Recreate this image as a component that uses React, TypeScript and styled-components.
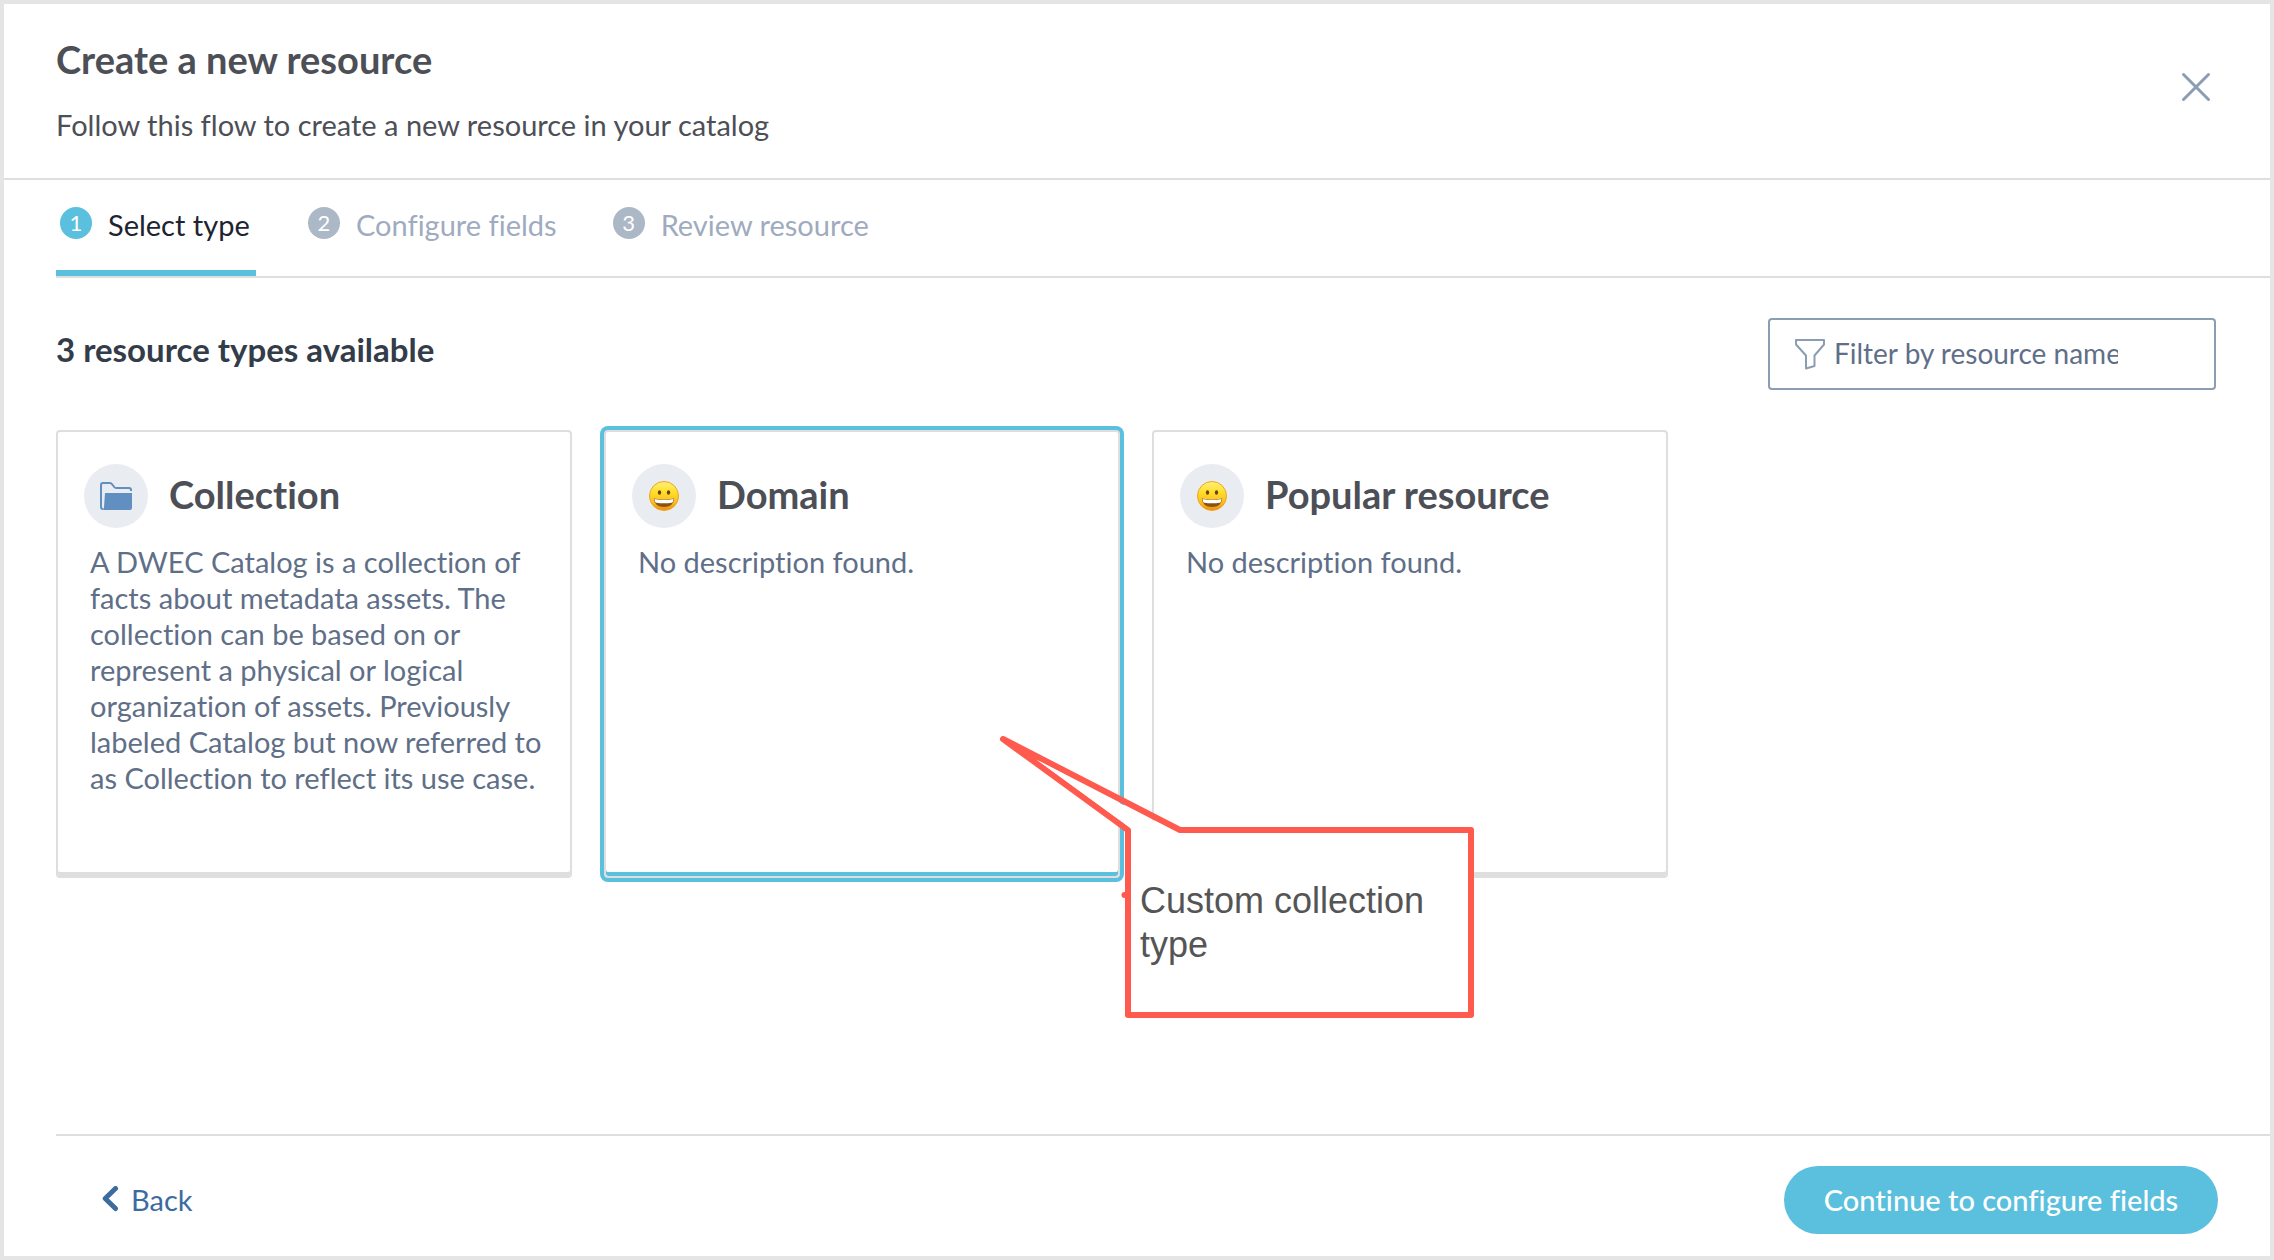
import React, { useState } from 'react';
import styled, { createGlobalStyle, css } from 'styled-components';

const color = {
  frame: '#e5e5e5',
  rule: '#dedede',
  title: '#4d4f57',
  heading: '#333c49',
  body: '#5f6f88',
  active: '#1d2430',
  muted: '#9fabbe',
  badge: '#adb8c7',
  outline: '#8b9db3',
  accent: '#5bbfde',
  link: '#3e6b9f',
  halo: '#e9ecf1',
  folder: '#628fc2',
  callout: '#ff5a4d',
};

const sans = '"Lato", "Open Sans", sans-serif';

const GlobalStyle = createGlobalStyle`
  *, *::before, *::after { box-sizing: border-box; }
  body { margin: 0; background: #fff; font-family: ${sans}; font-variant-ligatures: none; }
  h1, h2, p, ul, ol { margin: 0; padding: 0; }
  ul, ol { list-style: none; }
  button, input { font: inherit; font-variant-ligatures: none; }
`;

const Dialog = styled.main`
  display: flex;
  flex-direction: column;
  min-height: 100vh;
  border: 4px solid ${color.frame};
  background: #fff;
  font-size: 29px;
  line-height: 36px;
`;

const Header = styled.header`
  display: flex;
  justify-content: space-between;
  align-items: flex-start;
  padding: 33px 52px 35px;
  border-bottom: 2px solid ${color.rule};
`;

const HeaderText = styled.div`
  display: flex;
  flex-direction: column;
  gap: 26px;
  color: ${color.title};
`;

const Title = styled.h1`
  font-size: 38px;
  line-height: 44px;
  font-weight: 700;
`;

const CloseButton = styled.button`
  display: flex;
  align-items: center;
  justify-content: center;
  width: 44px;
  height: 44px;
  margin-top: 28px;
  padding: 0;
  border: 0;
  background: none;
  color: ${color.outline};
  cursor: pointer;
`;

const Steps = styled.ol`
  display: flex;
  gap: 48px;
  margin-left: 52px;
  border-bottom: 2px solid ${color.rule};
`;

const Step = styled.li<{ $active: boolean; $width: number }>`
  display: flex;
  align-items: flex-start;
  gap: 16px;
  min-width: ${p => p.$width}px;
  padding: 27px 4px;
  border-bottom: 6px solid ${p => (p.$active ? color.accent : 'transparent')};
  color: ${p => (p.$active ? color.active : color.muted)};
`;

const StepBadge = styled.span<{ $active: boolean }>`
  width: 32px;
  height: 32px;
  border-radius: 50%;
  background: ${p => (p.$active ? color.accent : color.badge)};
  color: #fff;
  font-size: 22px;
  line-height: 32px;
  text-align: center;
`;

const Content = styled.section`
  display: flex;
  flex: 1;
  flex-direction: column;
  gap: 40px;
  padding: 40px 54px 40px 52px;
`;

const Toolbar = styled.div`
  display: flex;
  justify-content: space-between;
  align-items: flex-start;
`;

const SectionTitle = styled.h2`
  padding-top: 11px;
  color: ${color.heading};
  font-size: 33px;
  line-height: 40px;
  font-weight: 700;
`;

const FilterBox = styled.label`
  display: flex;
  align-items: center;
  gap: 8px;
  width: 448px;
  height: 72px;
  padding: 0 24px;
  border: 2px solid ${color.outline};
  border-radius: 4px;
  color: ${color.outline};
`;

const FilterInput = styled.input`
  width: 284px;
  height: 40px;
  padding: 0 0 2px;
  border: 0;
  outline: 0;
  background: none;
  color: ${color.body};
  font-size: 28px;

  &::placeholder {
    color: ${color.body};
    opacity: 1;
  }
`;

const CardGrid = styled.ul`
  display: grid;
  grid-template-columns: repeat(auto-fill, 516px);
  gap: 32px;
`;

const CardItem = styled.li<{ $raised: boolean }>`
  position: relative;
  display: flex;
  z-index: ${p => (p.$raised ? 1 : 0)};
`;

const Card = styled.button<{ $selected: boolean }>`
  display: flex;
  flex-direction: column;
  gap: 16px;
  width: 100%;
  min-height: 448px;
  padding: 32px 26px;
  border: 2px solid ${color.rule};
  border-radius: 4px;
  background: #fff;
  box-shadow: inset 0 -4px 0 ${color.rule};
  text-align: left;
  cursor: pointer;

  ${p =>
    p.$selected &&
    css`
      box-shadow: inset 0 -4px 0 ${color.accent}, 0 0 0 4px ${color.accent};
    `}
`;

const CardHead = styled.span`
  display: flex;
  align-items: center;
  gap: 21px;
`;

const IconHalo = styled.span`
  display: flex;
  align-items: center;
  justify-content: center;
  width: 64px;
  height: 64px;
  border-radius: 50%;
  background: ${color.halo};
`;

const CardTitle = styled.span`
  padding-bottom: 4px;
  color: ${color.title};
  font-size: 38px;
  line-height: 44px;
  font-weight: 700;
`;

const CardText = styled.span`
  padding-left: 6px;
  color: ${color.body};
`;

const Callout = styled.aside`
  position: absolute;
  top: 304px;
  left: 394px;
  width: 478px;
  height: 288px;
  pointer-events: none;
`;

const CalloutShape = styled.svg`
  display: block;
`;

const CalloutText = styled.p`
  position: absolute;
  top: 145px;
  left: 142px;
  width: 310px;
  color: #555;
  font-family: "Liberation Sans", Arial, sans-serif;
  font-size: 36px;
  line-height: 44px;
`;

const Footer = styled.footer`
  display: flex;
  justify-content: space-between;
  align-items: center;
  margin-left: 52px;
  padding: 30px 52px 22px 46px;
  border-top: 2px solid ${color.rule};
`;

const BackButton = styled.button`
  display: flex;
  align-items: center;
  gap: 12px;
  padding: 0;
  border: 0;
  background: none;
  color: ${color.link};
  cursor: pointer;
`;

const PrimaryButton = styled.button`
  min-width: 434px;
  height: 68px;
  padding: 0 36px;
  border: 0;
  border-radius: 34px;
  background: ${color.accent};
  color: #fff;
  font-weight: 500;
  cursor: pointer;
`;

function CloseIcon() {
  return (
    <svg width="30" height="30" viewBox="0 0 30 30" fill="none" stroke="currentColor" strokeWidth="3" strokeLinecap="round" aria-hidden="true">
      <path d="M2.5 2.5 27.5 27.5M27.5 2.5 2.5 27.5" />
    </svg>
  );
}

function FunnelIcon() {
  return (
    <svg width="32" height="32" viewBox="0 0 32 32" fill="none" stroke="currentColor" strokeWidth="2" strokeLinejoin="round" aria-hidden="true">
      <path d="M2 2H30V6.500L20.500 17.500V28L12 30.500V17.500L2 6.500Z" />
    </svg>
  );
}

function ChevronIcon() {
  return (
    <svg width="17" height="28" viewBox="0 0 17 28" fill="none" stroke="currentColor" strokeWidth="5" strokeLinecap="round" strokeLinejoin="round" aria-hidden="true">
      <path d="M13.500 2.500 3.200 12.500 13.500 22.500" />
    </svg>
  );
}

function FolderIcon() {
  return (
    <svg width="32" height="28" viewBox="0 0 32 28" fill="none" aria-hidden="true">
      <path d="M31 9V8Q31 6 29 6H16Q15 6 14.200 5L12 2.200Q11.200 1 10 1H3Q1 1 1 3V25Q1 27 3 27" stroke={color.folder} strokeWidth="2" />
      <path d="M5 11H32V26Q32 28 30 28H2.500Q3.800 27 4 25Z" fill={color.folder} />
    </svg>
  );
}

function GrinIcon({ id }: { id: string }) {
  return (
    <svg width="30" height="30" viewBox="0 0 30 30" aria-hidden="true">
      <defs>
        <linearGradient id={id} x1="0" y1="0" x2="0" y2="1">
          <stop offset="0" stopColor="#fff07a" />
          <stop offset="0.35" stopColor="#ffe02e" />
          <stop offset="0.75" stopColor="#fcba1e" />
          <stop offset="1" stopColor="#ee8a12" />
        </linearGradient>
      </defs>
      <circle cx="15" cy="15" r="14.500" fill={`url(#${id})`} stroke="#eda51f" strokeWidth="1" />
      <ellipse cx="10.500" cy="11.500" rx="1.700" ry="2.300" fill="#6d4210" />
      <ellipse cx="19.500" cy="11.500" rx="1.700" ry="2.300" fill="#6d4210" />
      <path d="M4.800 17.500Q15 19.500 25.200 17.500Q24.500 26 15 26Q5.500 26 4.800 17.500Z" fill="#8a5410" />
      <path d="M5.500 17.900Q15 19.700 24.500 17.900Q24.300 21.300 22.800 21.700Q15 22.800 7.200 21.700Q5.700 21.300 5.500 17.900Z" fill="#fff" />
    </svg>
  );
}

const steps = [
  { label: 'Select type', width: 200 },
  { label: 'Configure fields', width: 256 },
  { label: 'Review resource', width: 256 },
];

const types = [
  {
    name: 'Collection',
    text: 'A DWEC Catalog is a collection of facts about metadata assets. The collection can be based on or represent a physical or logical organization of assets. Previously labeled Catalog but now referred to as Collection to reflect its use case.',
    icon: <FolderIcon />,
  },
  { name: 'Domain', text: 'No description found.', icon: <GrinIcon id="grin-domain" />, note: 'Custom collection type' },
  { name: 'Popular resource', text: 'No description found.', icon: <GrinIcon id="grin-popular" /> },
];

function CalloutNote({ text }: { text: string }) {
  return (
    <Callout>
      <CalloutShape width="478" height="288" viewBox="0 0 478 288" aria-hidden="true">
        <circle cx="126.500" cy="161" r="3" fill={color.callout} />
        <path
          d="M5 5 182 96H473V281H130V96Z"
          fill="none"
          stroke={color.callout}
          strokeWidth="6"
          strokeLinejoin="round"
        />
        <path d="M40 26.500 179 99H470V278H133V94.500Z" fill="#fff" />
      </CalloutShape>
      <CalloutText>{text}</CalloutText>
    </Callout>
  );
}

export default function App() {
  const [selected, setSelected] = useState('Domain');
  const [filter, setFilter] = useState('');
  const shown = types.filter(t => t.name.toLowerCase().includes(filter.toLowerCase()));

  return (
    <>
      <GlobalStyle />
      <Dialog>
        <Header>
          <HeaderText>
            <Title>Create a new resource</Title>
            <p>Follow this flow to create a new resource in your catalog</p>
          </HeaderText>
          <CloseButton type="button" aria-label="Close">
            <CloseIcon />
          </CloseButton>
        </Header>

        <Steps>
          {steps.map((step, i) => (
            <Step key={step.label} $active={i === 0} $width={step.width} aria-current={i === 0 ? 'step' : undefined}>
              <StepBadge $active={i === 0}>{i + 1}</StepBadge>
              <span>{step.label}</span>
            </Step>
          ))}
        </Steps>

        <Content>
          <Toolbar>
            <SectionTitle>{shown.length} resource types available</SectionTitle>
            <FilterBox>
              <FunnelIcon />
              <FilterInput
                type="text"
                aria-label="Filter by resource name"
                placeholder="Filter by resource name"
                value={filter}
                onChange={e => setFilter(e.target.value)}
              />
            </FilterBox>
          </Toolbar>

          <CardGrid>
            {shown.map(type => (
              <CardItem key={type.name} $raised={Boolean(type.note)}>
                <Card
                  type="button"
                  aria-pressed={selected === type.name}
                  $selected={selected === type.name}
                  onClick={() => setSelected(type.name)}
                >
                  <CardHead>
                    <IconHalo>{type.icon}</IconHalo>
                    <CardTitle>{type.name}</CardTitle>
                  </CardHead>
                  <CardText>{type.text}</CardText>
                </Card>
                {type.note && <CalloutNote text={type.note} />}
              </CardItem>
            ))}
          </CardGrid>
        </Content>

        <Footer>
          <BackButton type="button">
            <ChevronIcon />
            Back
          </BackButton>
          <PrimaryButton type="button">Continue to configure fields</PrimaryButton>
        </Footer>
      </Dialog>
    </>
  );
}
